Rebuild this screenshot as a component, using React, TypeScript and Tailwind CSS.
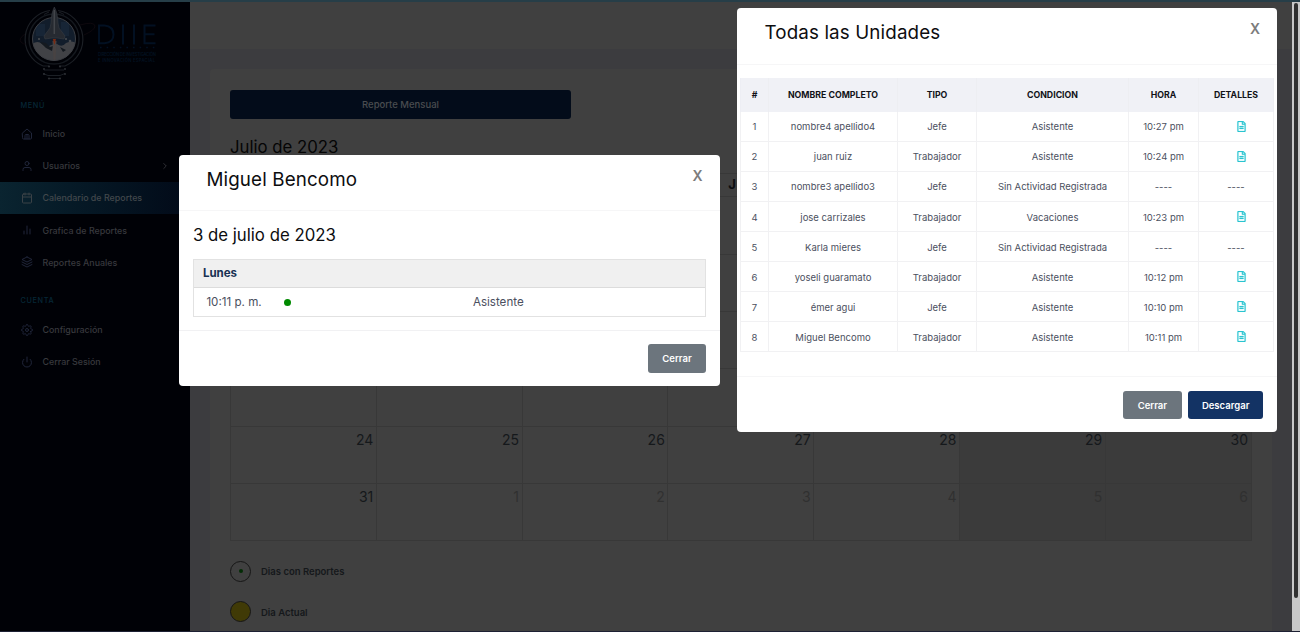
import React from "react";
import { FiUser, FiCalendar, FiBarChart2, FiLayers, FiSettings, FiPower, FiChevronRight } from "react-icons/fi";
import { FaRegFileAlt } from "react-icons/fa";

const HomeIcon = () => (
  <svg viewBox="0 0 24 24" width="12" height="12" fill="none" stroke="currentColor" strokeWidth="2" strokeLinecap="round" strokeLinejoin="round">
    <path d="M3 10 12 2l9 8v10a2 2 0 0 1-2 2H5a2 2 0 0 1-2-2z" />
    <path d="M8 22v-7a2 2 0 0 1 2-2h4a2 2 0 0 1 2 2v7M12 13v9" />
  </svg>
);

function Logo() {
  return (
    <svg width="190" height="84" viewBox="0 0 190 84" className="block">
      <defs>
        <clipPath id="disc"><circle cx="54" cy="37" r="21.5" /></clipPath>
      </defs>
      <g fill="none" stroke="#1b1f25" strokeWidth="1">
        <path d="M43 64A29 29 0 0 1 50 8.500M58 8.500A29 29 0 0 1 65 64" strokeWidth="1.200" />
        <circle cx="54" cy="37" r="25" stroke="#14181e" strokeWidth="1.500" />
        <path d="M44 12.500 49 10M64 12.500 59 10" />
        <path d="M43 64h6M59 64h6M44 68h20M43 71.500l5 2h12l5-2M49 76.500h10" />
      </g>
      <path d="M25 32q-7 5-4 8 3 3 5 2M80 23q14-4 15 1 0 4-11 9" fill="none" stroke="#140b11" strokeWidth="0.700" />
      <g fill="#2c2f34">
        <circle cx="49" cy="64.500" r="1.100" /><circle cx="60" cy="64.500" r="1.100" />
        <circle cx="44" cy="67" r="1" /><circle cx="65" cy="67" r="1" />
        <circle cx="44" cy="72" r="1" /><circle cx="65" cy="72" r="1" />
        <circle cx="49" cy="76.500" r="1.100" /><circle cx="60" cy="76.500" r="1.100" />
      </g>
      <g clipPath="url(#disc)">
        <rect x="32" y="15" width="44" height="44" fill="#121d2b" />
        <path d="M36 22h9v12h-9zM61 20h8v14h-8z" fill="#172536" />
        <path d="M32 42q6-4 10 0 5 4 9 1l6-1q5 4 9-1 6-3 10 0v20H32z" fill="#414246" />
        <path d="M40 40l6 1 4 4 3-1-1 5-6-3zM60 45l6 3-3 2z" fill="#151a20" />
        <circle cx="66" cy="37" r="1" fill="#4a4d52" /><circle cx="70" cy="39" r="1.300" fill="#44474c" />
        <circle cx="39" cy="37" r="1" fill="#4a4d52" />
        <path d="M52.500 39h4l-1 19h-2z" fill="#484343" />
      </g>
      <circle cx="54" cy="37" r="21.500" fill="none" stroke="#3d3f44" strokeWidth="1" />
      <path d="M54.300 5c-2.300 5-3 9-3.300 16l-1 5-6 8 1 3 7-1h5l7 1 1-3-6-8-1-5c-.300-7-1-11-3.700-16z" fill="#262a31" stroke="#3c4046" strokeWidth="0.500" />
      <path d="M54.300 8v24" stroke="#43464b" strokeWidth="1.500" />
      <path d="M52.800 37h3.200l-1.500 6z" fill="#7a2a12" />
      <g fill="none" stroke="#021022" strokeWidth="2">
        <path d="M99 23.500h5.500q9 1 9 9t-9 8.700H99zM123 22.500v20M134 22.500v20M155.500 23.500h-11v17.700h11M144.500 32.200h10" />
      </g>
      <path d="M100 45.500h55" stroke="#021022" strokeWidth="1.600" strokeDasharray="1.600 5" />
      <text x="98" y="53.500" fontSize="4.200" textLength="58" fontFamily="Inter, sans-serif" fontWeight="600" fill="#031222">DIRECCIÓN DE INVESTIGACIÓN</text>
      <text x="98" y="59.500" fontSize="4.200" textLength="57" fontFamily="Inter, sans-serif" fontWeight="600" fill="#031222">E INNOVACIÓN ESPACIAL</text>
    </svg>
  );
}

type ItemProps = { icon: React.ReactNode; label: string; active?: boolean; arrow?: boolean };

function Item({ icon, label, active, arrow }: ItemProps) {
  return (
    <div className={"flex h-[32.100px] items-center pl-[20.500px] pr-5 text-[8.900px] font-medium " + (active ? "bg-gradient-to-r from-[#0a2430] to-[#020a18] text-[#42484c]" : "text-[#38393e]")}>
      <span className={"flex w-[22px] " + (active ? "text-[#3b4247]" : "text-[#20263a]")}>{icon}</span>
      <span className="flex-1 whitespace-nowrap">{label}</span>
      {arrow && <FiChevronRight size={10} />}
    </div>
  );
}

function Sidebar() {
  return (
    <aside className="h-full w-[190px] shrink-0 bg-[#000106]">
      <Logo />
      <div className="mt-[12.500px] flex h-4 items-center pl-[20.500px] text-[7.300px] font-medium tracking-[0.600px] text-[#062736]">MENÚ</div>
      <div className="mt-[3.900px]">
        <Item icon={<HomeIcon />} label="Inicio" />
        <Item icon={<FiUser size={12} />} label="Usuarios" arrow />
        <Item icon={<FiCalendar size={12} />} label="Calendario de Reportes" active />
        <Item icon={<FiBarChart2 size={12} />} label="Grafica de Reportes" />
        <Item icon={<FiLayers size={12} />} label="Reportes Anuales" />
      </div>
      <div className="mt-[15.600px] flex h-4 items-center pl-[20.500px] text-[7.300px] font-medium tracking-[0.650px] text-[#062736]">CUENTA</div>
      <div className="mt-[3.500px]">
        <Item icon={<FiSettings size={12} />} label="Configuración" />
        <Item icon={<FiPower size={12} />} label="Cerrar Sesión" />
      </div>
    </aside>
  );
}

const weekdays = ["", "", "", "J", "", "", ""];
const days: (number | null)[] = [...Array.from({ length: 28 }, () => null), 24, 25, 26, 27, 28, 29, 30, 31, 1, 2, 3, 4, 5, 6];

function Calendar() {
  return (
    <div className="mt-[13.200px] w-[1021.500px] border-l border-t border-[#383838]">
      <div className="grid h-[23.500px] grid-cols-7">
        {weekdays.map((d, i) => (
          <div key={i} className="flex items-center border-b border-r border-[#383838] pl-[60px] text-[13px] font-bold text-[#0b0d10]">{d}</div>
        ))}
      </div>
      <div className="grid grid-cols-7">
        {days.map((d, i) => (
          <div key={i} className={"h-[57.350px] border-b border-r border-[#383838] pr-[2.500px] pt-[3px] text-right text-[14px] leading-[20px] " + (i % 7 > 4 ? "bg-[#3b3b3b] " : "") + (i > 35 ? "text-[#303030]" : "text-[#15181b]")}>{d}</div>
        ))}
      </div>
    </div>
  );
}

const rows = [
  ["nombre4 apellido4", "Jefe", "Asistente", "10:27 pm"],
  ["juan ruiz", "Trabajador", "Asistente", "10:24 pm"],
  ["nombre3 apellido3", "Jefe", "Sin Actividad Registrada", "----"],
  ["jose carrizales", "Trabajador", "Vacaciones", "10:23 pm"],
  ["Karla mieres", "Jefe", "Sin Actividad Registrada", "----"],
  ["yoseli guaramato", "Trabajador", "Asistente", "10:12 pm"],
  ["émer agui", "Jefe", "Asistente", "10:10 pm"],
  ["Miguel Bencomo", "Trabajador", "Asistente", "10:11 pm"],
];

const cols = "grid grid-cols-[28px_129px_79px_152px_70px_75px]";

function UnitsModal() {
  return (
    <div className="absolute left-[737px] top-[8px] flex h-[424px] w-[540px] flex-col rounded-[4px] bg-white">
      <div className="flex h-[57px] shrink-0 items-start justify-between border-b border-[#f6f6f7] pl-[27.500px] pr-[17px]">
        <h2 className="mt-[11px] text-[18.800px] leading-[28px] tracking-[0.130px] text-[#0d0d0f]">Todas las Unidades</h2>
        <button className="mt-[11px] text-[14px] font-semibold leading-[20px] text-[#7c7c7c]">X</button>
      </div>
      <div className="ml-[3px] mt-[13px] w-[534px]">
        <div className={cols + " h-[34px] border-l border-[#edeef4] bg-[#f0f1f6] text-[8.750px] font-bold text-[#111217]"}>
          {["#", "NOMBRE COMPLETO", "TIPO", "CONDICION", "HORA", "DETALLES"].map((h) => (
            <div key={h} className="flex items-center justify-center whitespace-nowrap border-r border-[#edeef2] pt-[1.500px]">{h}</div>
          ))}
        </div>
        {rows.map((r, i) => (
          <div key={i} className={cols + " h-[30.060px] border-l border-[#f1f1f3] text-[9.500px] text-[#4b5060]"}>
            {[String(i + 1), ...r].map((c, j) => (
              <div key={j} className="flex items-center justify-center whitespace-nowrap border-b border-r border-[#f1f1f3] pt-[2px]">{c}</div>
            ))}
            <div className="flex items-center justify-center border-b border-r border-[#f1f1f3]">
              {r[3] === "----" ? <span className="pt-[2px]">----</span> : <FaRegFileAlt className="ml-[10px] text-[#2bc6d2]" size={11} strokeWidth={10} />}
            </div>
          </div>
        ))}
      </div>
      <div className="mt-auto flex h-[56px] shrink-0 justify-end gap-[6px] border-t border-[#f6f6f7] pr-[13.600px] pt-[14px] text-[9.500px] font-semibold text-white">
        <button className="h-[28px] w-[59px] rounded-[3px] bg-[#6c757d] pt-[1.500px]">Cerrar</button>
        <button className="h-[28px] w-[75.500px] rounded-[3px] bg-[#133364] pt-[1.500px]">Descargar</button>
      </div>
    </div>
  );
}

function PersonModal() {
  return (
    <div className="absolute left-[179.400px] top-[155px] flex h-[231px] w-[540.600px] flex-col rounded-[4px] bg-white">
      <div className="flex h-[56px] shrink-0 items-start justify-between border-b border-[#f6f6f7] pl-[27px] pr-[17.500px]">
        <h2 className="mt-[11px] text-[18.800px] leading-[28px] tracking-[0.130px] text-[#0d0d0f]">Miguel Bencomo</h2>
        <button className="mt-[11px] text-[14px] font-semibold leading-[20px] text-[#7c7c7c]">X</button>
      </div>
      <div className="pl-[13.500px] pr-[14.200px] pt-[11px]">
        <h3 className="pt-[1px] text-[16.800px] leading-[24px] text-[#0d0d0f]">3 de julio de 2023</h3>
        <div className="mt-[12px] h-[58px] border border-[#e2e2e2]">
          <div className="flex h-[28px] items-center border-b border-[#dcdcdc] bg-[#f0f0f0] pl-[9px] text-[11.500px] font-bold text-[#183153]">Lunes</div>
          <div className="flex h-[28px] items-center pl-[12.500px] text-[11.600px] text-[#4b5060]">
            <span className="w-[77.500px] pt-[1.500px]">10:11 p. m.</span>
            <span className="size-[7px] rounded-full bg-[#008a00]" />
            <span className="ml-[182px] pt-[1.500px]">Asistente</span>
          </div>
        </div>
      </div>
      <div className="mt-auto flex h-[56px] shrink-0 justify-end border-t border-[#f1f1f3] pr-[14px] pt-[13px]">
        <button className="h-[29px] w-[58px] rounded-[3px] bg-[#6c757d] pt-[1.500px] text-[9.500px] font-semibold text-white">Cerrar</button>
      </div>
    </div>
  );
}

export default function App() {
  return (
    <div className="relative flex h-[632px] w-[1300px] flex-col overflow-hidden bg-[#3c3c3f] font-['Inter',sans-serif]">
      <div className="h-[1.500px] shrink-0 bg-[#263e48]" />
      <div className="flex min-h-0 flex-1">
        <Sidebar />
        <main className="min-w-0 flex-1 overflow-hidden">
          <div className="h-[47px] bg-[#404040]" />
          <div className="ml-[20px] mt-[20px] h-[570px] w-[1062px] rounded-[4px] bg-[#404040] px-[20px] pt-[21px]">
            <button className="block h-[29px] w-[341px] rounded-[3px] bg-[#030c1a] pt-[1.500px] text-[9.500px] font-medium text-[#4a4c50]">Reporte Mensual</button>
            <h1 className="mt-[16px] text-[16.750px] leading-[25px] text-[#050505]">Julio de 2023</h1>
            <Calendar />
            <div className="mt-[19.400px] flex items-center gap-[10px] text-[9.500px] font-semibold text-[#15181b]">
              <span className="flex size-[21px] items-center justify-center rounded-full border border-[#161616] pb-[1px]">
                <span className="size-[4px] rounded-full bg-[#032b05]" />
              </span>
              <span className="pt-[2px]">Dias con Reportes</span>
            </div>
            <div className="mt-[19.800px] flex items-center gap-[10px] text-[9.500px] font-semibold text-[#15181b]">
              <span className="size-[21px] rounded-full border border-[#161616] bg-[#403a06]" />
              <span className="pt-[2px]">Dia Actual</span>
            </div>
          </div>
        </main>
        <div className="flex w-[8px] shrink-0 justify-center bg-[#c8c8c8] pt-[1.500px]">
          <div className="h-[595px] w-[4px] rounded-full bg-[#303030]" />
        </div>
      </div>
      <div className="h-px shrink-0 bg-[#1d2033]" />
      <PersonModal />
      <UnitsModal />
    </div>
  );
}
